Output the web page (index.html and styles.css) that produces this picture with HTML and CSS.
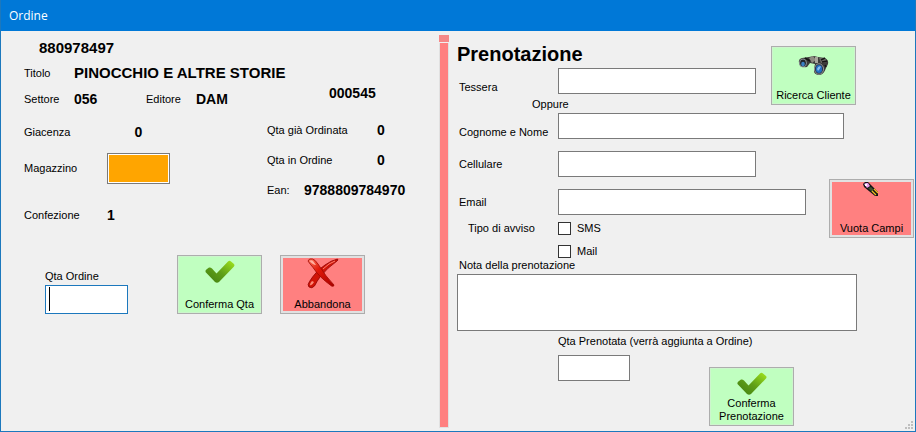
FILE: index.html
```html
<!DOCTYPE html>
<html lang="it">
<head>
    <meta charset="UTF-8">
    <meta name="viewport" content="width=device-width, initial-scale=1.0">
    <title>Ordine</title>
    <link rel="stylesheet" href="styles.css">
</head>
<body>
    <!-- shared icon -->
    <svg class="defs" width="0" height="0" aria-hidden="true">
        <defs>
            <linearGradient id="leaf" x1="0" y1="1" x2="1" y2="0">
                <stop offset="0" stop-color="#3f7d10"/>
                <stop offset="0.5" stop-color="#5f9f18"/>
                <stop offset="1" stop-color="#a2e61c"/>
            </linearGradient>
            <symbol id="check" viewBox="0 0 32 26">
                <path d="M1.500 14 Q1 12 3 11 L5 9.500 Q6.500 9 8 10.500 L12.500 15.500 L24 3.500 Q25.500 2 27 3.500 L30 6 Q31 7 30 8.500 L15 24 Q13 25.500 11 24 Z" fill="url(#leaf)"/>
            </symbol>
        </defs>
    </svg>

    <div class="window">
        <header class="titlebar">Ordine</header>

        <main class="content">
            <section class="order">
                <div class="code value large">880978497</div>
                <div class="info-row">
                    <span class="name">Titolo</span>
                    <span class="value large">PINOCCHIO E ALTRE STORIE</span>
                </div>
                <div class="info-row publisher">
                    <span class="name">Settore</span>
                    <span class="value sector">056</span>
                    <span class="name">Editore</span>
                    <span class="value house">DAM</span>
                    <span class="value number">000545</span>
                </div>

                <div class="details">
                    <div class="stock">
                        <span>Giacenza</span>
                        <span class="value centered">0</span>
                        <label for="magazzino">Magazzino</label>
                        <input type="text" id="magazzino" class="warehouse" readonly>
                        <span>Confezione</span>
                        <span class="value">1</span>
                    </div>
                    <div class="ordered">
                        <div class="ordered-row"><span class="ordered-name">Qta già Ordinata</span><span class="value">0</span></div>
                        <div class="ordered-row"><span class="ordered-name">Qta in Ordine</span><span class="value">0</span></div>
                        <div class="ordered-row"><span class="ean-name">Ean:</span><span class="value">9788809784970</span></div>
                    </div>
                </div>

                <div class="order-actions">
                    <div class="qty">
                        <label for="qtaOrdine">Qta Ordine</label>
                        <input type="text" id="qtaOrdine" class="qty-input">
                    </div>
                    <button type="button" class="btn green">
                        <svg class="icon"><use href="#check"/></svg>
                        Conferma Qta
                    </button>
                    <button type="button" class="btn red">
                        <svg class="icon" viewBox="0 0 32 26">
                            <defs>
                                <linearGradient id="cross" x1="0" y1="0" x2="1" y2="1">
                                    <stop offset="0" stop-color="#ff7a60"/>
                                    <stop offset="0.4" stop-color="#e01808"/>
                                    <stop offset="1" stop-color="#a80000"/>
                                </linearGradient>
                            </defs>
                            <path d="M30.500 1 Q31.500 2 30 3 Q20 10 13 19 Q10 23 7.500 28 Q5 31 2 29 Q0 27 2.500 23.500 Q9 13 18 7 Q24 2.500 30.500 1 Z" fill="#d01408" stroke="#8e0000" stroke-width="0.800"/>
                            <path d="M1 3 Q2 0 5.500 1 Q8 1.500 11 6 Q19 19 27 27 Q27 29 24.500 28 Q12 19 6 9.500 Q3 6 1 3 Z" fill="url(#cross)" stroke="#a00800" stroke-width="0.800"/>
                            <path d="M2.500 3 Q4 1.500 6 3 L9 7 Q6 7 2.500 3 Z" fill="#ffb0a0"/>
                            <path d="M3 27 Q3 25 5 23 L7 24 Q5 28 3 27 Z" fill="#ff8a78"/>
                            <path d="M28 3 Q22 5 16 11" fill="none" stroke="#ff8070" stroke-width="1"/>
                        </svg>
                        Abbandona
                    </button>
                </div>
            </section>

            <div class="divider"></div>

            <section class="booking">
                <div class="booking-top">
                    <div>
                        <h1>Prenotazione</h1>
                        <div class="field low">
                            <label for="tessera">Tessera</label>
                            <input type="text" id="tessera" class="short">
                        </div>
                        <div class="or">Oppure</div>
                    </div>
                    <button type="button" class="btn green">
                        <svg class="icon" viewBox="0 0 32 26">
                            <path d="M1 14 Q0 10 4 9 L11 8 L16 7 L20 8 L27 9 Q31 11 30 15 L28 19 Q26 25 22 26 Q15 26 16 20 L17 15 L12 14 L9 18 Q3 19 1 14 Z" fill="#3c3c3a"/>
                            <path d="M11 9 L15 7 L18 11 L14 14 Z" fill="#8c8a80"/>
                            <path d="M17 8 L20 8 L20 14 L17 14 Z" fill="#a8a69c"/>
                            <path d="M21 9 L27 9 L29 13 L23 14 Z" fill="#6c6b66"/>
                            <path d="M23 11 L27 9 M24 13 L29 12 M7 9 L12 12 M27 16 L28 18" stroke="#161616" stroke-width="1.500"/>
                            <ellipse cx="5" cy="14" rx="3.500" ry="4" fill="#20242a" stroke="#8b9095"/>
                            <ellipse cx="5" cy="15" rx="1.800" ry="2.200" fill="#3980c4"/>
                            <ellipse cx="21" cy="20" rx="4.500" ry="5.200" fill="#242a34" stroke="#969ca0"/>
                            <ellipse cx="21" cy="20" rx="3.200" ry="3.900" fill="#246dc0"/>
                            <path d="M19 20 Q20 16.500 23 17.500 Q22 20 20 22 Z" fill="#87c0f0"/>
                        </svg>
                        Ricerca Cliente
                    </button>
                </div>

                <div class="field low full-name">
                    <label for="nome">Cognome e Nome</label>
                    <input type="text" id="nome">
                </div>
                <div class="field phone">
                    <label for="cellulare">Cellulare</label>
                    <input type="text" id="cellulare" class="short">
                </div>

                <div class="contact">
                    <div class="contact-fields">
                        <div class="field">
                            <label for="email">Email</label>
                            <input type="text" id="email">
                        </div>
                        <div class="notice">
                            <span class="notice-name">Tipo di avviso</span>
                            <div class="notice-options">
                                <label class="option"><input type="checkbox" name="sms">SMS</label>
                                <label class="option"><input type="checkbox" name="mail">Mail</label>
                            </div>
                        </div>
                    </div>
                    <button type="button" class="btn red">
                        <svg class="icon" viewBox="0 0 32 26">
                            <path d="M7 2 L9 0 H12 L22 10 V14 H19 L8 5 Z" fill="#151515"/>
                            <path d="M8 2 L10 1 H12 L14 4 L11 6 Z" fill="#e9a0f0"/>
                            <path d="M9 2 H11 V4 H9 Z" fill="#fff"/>
                            <path d="M12 6 L15 5 L18 8 L16 10 Z" fill="#3d5230"/>
                            <path d="M16 9 L20 13 M18 7 L22 11" stroke="#f2c020" stroke-width="1.200"/>
                            <path d="M17 8 L21 12" stroke="#151515" stroke-width="1"/>
                        </svg>
                        Vuota Campi
                    </button>
                </div>

                <div class="note">
                    <label for="nota">Nota della prenotazione</label>
                    <textarea id="nota"></textarea>
                </div>

                <div class="booked">
                    <label for="qtaPrenotata">Qta Prenotata (verrà aggiunta a Ordine)</label>
                    <div class="booked-row">
                        <input type="text" id="qtaPrenotata" class="booked-input">
                        <button type="button" class="btn green">
                            <svg class="icon"><use href="#check"/></svg>
                            Conferma Prenotazione
                        </button>
                    </div>
                </div>
            </section>
        </main>

        <svg class="grip" width="9" height="9" viewBox="0 0 9 9" aria-hidden="true">
            <path d="M6 0h2v2h-2z M3 3h2v2h-2z M6 3h2v2h-2z M0 6h2v2h-2z M3 6h2v2h-2z M6 6h2v2h-2z" fill="#bfbfbf"/>
        </svg>
    </div>
</body>
</html>
```

FILE: styles.css
```css
* {
    box-sizing: border-box;
}
body {
    margin: 0;
    font-family: "Liberation Sans", Arial, sans-serif;
    font-size: 11px;
    line-height: 14px;
    color: #000;
    background-color: #f0f0f0;
}
.defs {
    position: absolute;
}
.window {
    position: relative;
    display: flex;
    flex-direction: column;
    min-height: 100vh;
    border: 1px solid #1c78bd;
    border-top: none;
}
.titlebar {
    height: 31px;
    padding: 0 8px;
    font-family: "Open Sans", "Noto Sans", sans-serif;
    font-size: 12px;
    line-height: 31px;
    color: #fff;
    background-color: #0078d7;
}
.content {
    display: flex;
    flex: 1;
}
input, textarea {
    display: block;
    margin: 0;
    padding: 2px 4px;
    font: inherit;
    background-color: #fff;
    border: 1px solid #7a7a7a;
    border-radius: 0;
    outline: none;
}
input {
    height: 26px;
}
.value {
    font-size: 14px;
    font-weight: bold;
    line-height: 20px;
}
.large {
    font-size: 15px;
}

/* left side: order */
.order {
    flex: 0 0 438px;
    padding-left: 23px;
}
.code {
    padding: 7px 0 5px 15px;
}
.info-row {
    display: flex;
    align-items: center;
}
.name {
    width: 50px;
}
.publisher {
    height: 32px;
}
.sector {
    width: 72px;
}
.house {
    width: 133px;
}
.number {
    align-self: flex-start;
}
.details {
    display: flex;
}
.stock {
    display: grid;
    grid-template-columns: 83px 63px;
    grid-template-rows: 34px 38px 56px;
    align-items: center;
    width: 243px;
}
.centered {
    text-align: center;
}
.warehouse {
    width: 63px;
    height: 31px;
    background-color: #ffa500;
    box-shadow: inset 0 0 0 1px #fff;
}
.ordered-row {
    display: flex;
    align-items: center;
    height: 30px;
}
.ordered-name {
    width: 110px;
}
.ean-name {
    width: 37px;
}
.order-actions {
    display: flex;
    align-items: flex-end;
    gap: 18px;
    padding: 12px 0 0 21px;
}
.qty {
    width: 83px;
    margin-right: 31px;
}
.qty-input {
    width: 100%;
    height: 29px;
    margin-top: 2px;
    border-color: #1c78bd;
    /* text cursor */
    background: #fff linear-gradient(#000, #000) no-repeat 3px 1px / 1px 24px;
}

/* buttons */
.btn {
    display: flex;
    flex-direction: column;
    align-items: center;
    justify-content: space-between;
    flex: none;
    width: 85px;
    height: 59px;
    padding: 2px;
    font: inherit;
    line-height: 13px;
    color: #000;
    border: 1px solid #adadad;
    border-radius: 0;
}
.green {
    background-color: #c0ffc0;
    box-shadow: inset 0 0 0 1px #cdf5cd;
}
.red {
    background-color: #ff8080;
    box-shadow: inset 0 0 0 2px #e1e1e1;
}
.icon {
    flex: none;
    width: 32px;
    height: 26px;
    overflow: visible;
}

/* bar between the two sides */
.divider {
    flex: 0 0 10px;
    margin: 4px 0 3px;
    background-color: #ff8080;
    border: solid #e1e1e1;
    border-width: 0 1px 1px;
}
.divider::before {
    content: "";
    display: block;
    height: 7px;
    margin: 0 -1px;
    background-color: #f58888;
    border-bottom: 1px solid #f0f0f0;
}

/* right side: booking */
.booking {
    flex: 1;
    padding: 10px 1px 5px 8px;
}
h1 {
    margin: 0;
    font-size: 20px;
    line-height: 27px;
}
.booking-top {
    display: flex;
    justify-content: space-between;
    padding-right: 58px;
}
.booking-top .btn {
    margin-top: 5px;
}
.field {
    display: flex;
    align-items: center;
}
.field label {
    flex: 0 0 101px;
    padding-left: 2px;
}
.field input {
    flex: 1;
}
.low {
    align-items: flex-end;
}
.field .short {
    flex: 0 0 198px;
}
.or {
    padding: 3px 0 2px 75px;
}
.full-name {
    padding-right: 70px;
}
.phone {
    margin-top: 12px;
}
.contact {
    display: flex;
    gap: 23px;
    padding-top: 2px;
}
.contact-fields {
    flex: 1;
    padding-top: 10px;
}
.notice {
    display: flex;
    padding-top: 6px;
}
.notice-name {
    width: 101px;
    padding-left: 11px;
}
.notice-options {
    display: flex;
    flex-direction: column;
    gap: 9px;
}
.option {
    display: flex;
    align-items: center;
    gap: 6px;
}
.option input {
    appearance: none;
    width: 13px;
    height: 13px;
    padding: 0;
    border-color: #333;
}
.note {
    padding-right: 57px;
}
.note label {
    padding-left: 2px;
}
.note textarea {
    width: 100%;
    height: 57px;
    margin-top: 2px;
    resize: none;
}
.booked {
    padding: 3px 0 0 101px;
}
.booked-row {
    display: flex;
    align-items: flex-start;
    gap: 79px;
    padding-top: 7px;
}
.booked-input {
    width: 72px;
}
.booked-row .btn {
    margin-top: 12px;
}
.grip {
    position: absolute;
    right: 1px;
    bottom: 1px;
}
```
